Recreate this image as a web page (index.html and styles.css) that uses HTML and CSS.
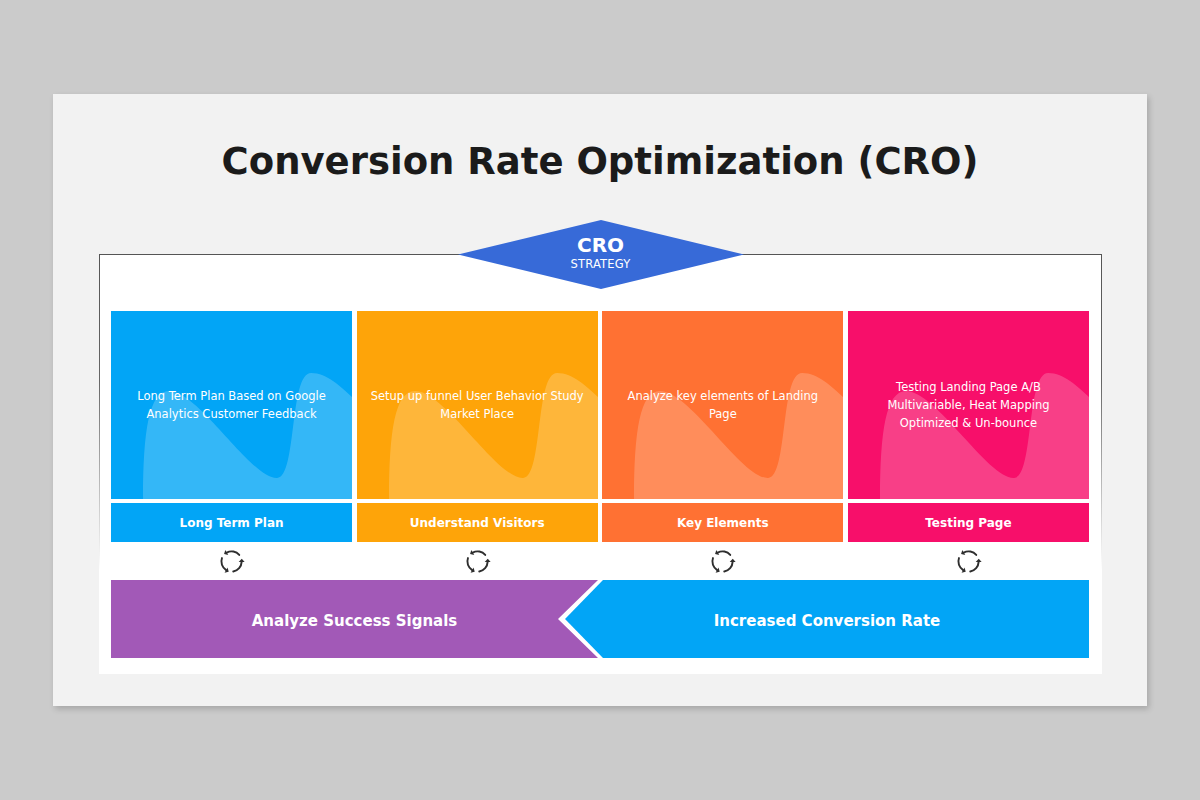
FILE: index.html
```html
<!DOCTYPE html>
<html>
<head>
<meta charset="utf-8">
<link rel="stylesheet" href="styles.css">
</head>
<body>
<svg width="0" height="0" class="defs">
  <defs>
    <g id="arc">
      <path d="M18.89 6.21 A9 9 0 0 0 7.77 4.05" fill="none" stroke="currentColor" stroke-width="1.7" stroke-linecap="round"/>
      <polygon points="5.4,5.3 9.1,6.3 6.5,1.7" fill="currentColor"/>
    </g>
    <path id="wave" d="M32 188 C32 120 38 80 58 80 C88 80 140 168 166 167 C186 166 178 62 200 62 C216 62 230 76 241 86 L241 188 Z"/>
  </defs>
</svg>
<div class="slide">
  <h1 class="title">Conversion Rate Optimization (CRO)</h1>
  <div class="frame">
    <div class="diamond">
      <svg class="diamond-bg" viewBox="0 0 286 69" preserveAspectRatio="none"><polygon points="0,34.5 143,0 286,34.5 143,69" fill="#376ad8"/></svg>
      <div class="diamond-text">
        <div class="d-main">CRO</div>
        <div class="d-sub">STRATEGY</div>
      </div>
    </div>
    <div class="cards">
      <div class="col c-blue">
        <div class="card">
          <svg class="wave" viewBox="0 0 241 188" preserveAspectRatio="none"><use href="#wave"/></svg>
          <p>Long Term Plan Based on Google Analytics Customer Feedback</p>
        </div>
        <div class="label">Long Term Plan</div>
        <div class="icon"><svg viewBox="0 0 24 24"><use href="#arc"/><use href="#arc" transform="rotate(-120 12 12)"/><use href="#arc" transform="rotate(-240 12 12)"/></svg></div>
      </div>
      <div class="col c-orange">
        <div class="card">
          <svg class="wave" viewBox="0 0 241 188" preserveAspectRatio="none"><use href="#wave"/></svg>
          <p>Setup up funnel User Behavior Study Market Place</p>
        </div>
        <div class="label">Understand Visitors</div>
        <div class="icon"><svg viewBox="0 0 24 24"><use href="#arc"/><use href="#arc" transform="rotate(-120 12 12)"/><use href="#arc" transform="rotate(-240 12 12)"/></svg></div>
      </div>
      <div class="col c-red">
        <div class="card">
          <svg class="wave" viewBox="0 0 241 188" preserveAspectRatio="none"><use href="#wave"/></svg>
          <p>Analyze key elements of Landing Page</p>
        </div>
        <div class="label">Key Elements</div>
        <div class="icon"><svg viewBox="0 0 24 24"><use href="#arc"/><use href="#arc" transform="rotate(-120 12 12)"/><use href="#arc" transform="rotate(-240 12 12)"/></svg></div>
      </div>
      <div class="col c-pink">
        <div class="card">
          <svg class="wave" viewBox="0 0 241 188" preserveAspectRatio="none"><use href="#wave"/></svg>
          <p>Testing Landing Page A/B Multivariable, Heat Mapping Optimized &amp; Un-bounce</p>
        </div>
        <div class="label">Testing Page</div>
        <div class="icon"><svg viewBox="0 0 24 24"><use href="#arc"/><use href="#arc" transform="rotate(-120 12 12)"/><use href="#arc" transform="rotate(-240 12 12)"/></svg></div>
      </div>
    </div>
    <div class="flow">
      <div class="flow-left"><span>Analyze Success Signals</span></div>
      <div class="flow-right"><span>Increased Conversion Rate</span></div>
    </div>
  </div>
</div>
</body>
</html>
```

FILE: styles.css
```css
* { box-sizing: border-box; }
html, body { margin: 0; padding: 0; }
body {
  background: #cbcbcb;
  width: 1200px;
  height: 800px;
  overflow: hidden;
  font-family: "DejaVu Sans", "Open Sans", sans-serif;
}
.defs { position: absolute; width: 0; height: 0; }
.slide {
  margin: 94px 0 0 53px;
  width: 1094px;
  height: 612px;
  background: #f2f2f2;
  box-shadow: 2px 3px 6px rgba(0,0,0,0.18);
  padding-top: 45px;
}
.title {
  margin: 0 0 69px 0;
  height: 46px;
  line-height: 46px;
  text-align: center;
  font-size: 37px;
  font-weight: 700;
  color: #1b1b1b;
}
.frame {
  position: relative;
  margin-left: 46px;
  width: 1003px;
  height: 420px;
  background: #fff;
  border: 1px solid #555;
  border-bottom: 0;
  border-image: linear-gradient(to bottom, #555 0%, #666 30%, rgba(255,255,255,0) 75%) 1;
  padding: 56px 12px 0 11px;
}
.diamond {
  position: absolute;
  left: 50%;
  top: -35px;
  width: 286px;
  height: 69px;
  transform: translateX(-50%);
}
.diamond-bg { position: absolute; inset: 0; width: 100%; height: 100%; }
.diamond-text {
  position: relative;
  height: 100%;
  display: flex;
  flex-direction: column;
  align-items: center;
  justify-content: center;
  color: #fff;
  padding-bottom: 3px;
}
.d-main { font-size: 20px; font-weight: 700; line-height: 22px; }
.d-sub { font-size: 11.5px; line-height: 16px; letter-spacing: 0.2px; }
.cards {
  display: grid;
  grid-template-columns: repeat(4, 1fr);
  column-gap: 4.5px;
}
.col { display: flex; flex-direction: column; }
.card {
  position: relative;
  height: 188px;
  display: flex;
  align-items: center;
  justify-content: center;
  overflow: hidden;
}
.wave {
  position: absolute;
  inset: 0;
  width: 100%;
  height: 100%;
  fill: rgba(255,255,255,0.2);
}
.card p {
  position: relative;
  margin: 0;
  padding: 0 12px;
  text-align: center;
  color: #fff;
  font-size: 11.5px;
  line-height: 18px;
}
.label {
  margin-top: 4px;
  height: 39px;
  display: flex;
  align-items: center;
  justify-content: center;
  color: #fff;
  font-size: 12px;
  font-weight: 700;
}
.icon {
  height: 38px;
  display: flex;
  align-items: center;
  justify-content: center;
  color: #2e2e2e;
}
.icon svg { width: 27px; height: 27px; }
.c-blue .card, .c-blue .label { background: #02a5f6; }
.c-orange .card, .c-orange .label { background: #fea409; }
.c-red .card, .c-red .label { background: #ff7133; }
.c-pink .card, .c-pink .label { background: #f70f6a; }
.flow {
  display: grid;
  height: 78px;
  color: #fff;
  font-size: 15px;
  font-weight: 700;
}
.flow > div {
  grid-area: 1 / 1;
  display: flex;
  align-items: center;
  padding-top: 3px;
}
.flow span { text-align: center; }
.flow-left {
  background: #a259b7;
  clip-path: polygon(0 0, 487px 0, 447px 50%, 487px 100%, 0 100%);
}
.flow-left span { width: 487px; }
.flow-right {
  background: #02a5f6;
  justify-content: flex-end;
  clip-path: polygon(492px 0, 100% 0, 100% 100%, 492px 100%, 454px 50%);
}
.flow-right span { width: 524px; }
```
